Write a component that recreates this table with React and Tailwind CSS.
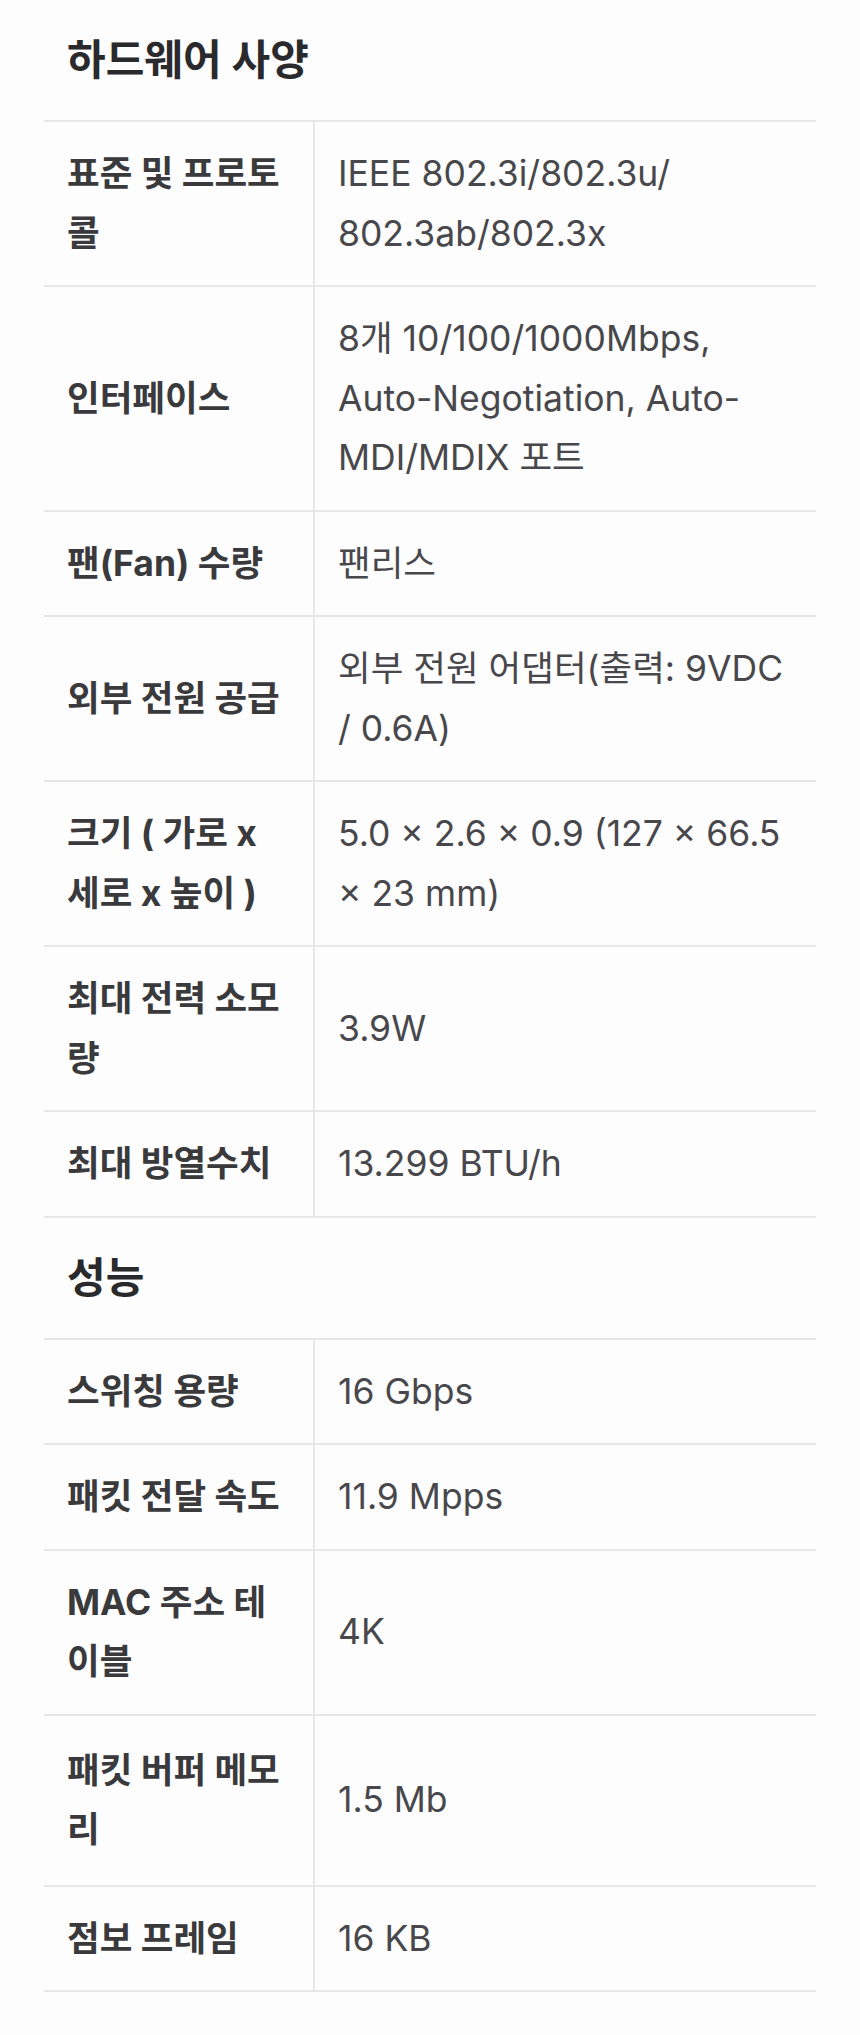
import React from 'react';

const FONT = { fontFamily: 'Inter, "Noto Sans CJK KR", sans-serif' };

const sections = [
    {
        title: '하드웨어 사양',
        rows: [
            { label: ['표준 및 프로토', '콜'], value: ['IEEE 802.3i/802.3u/', '802.3ab/802.3x'] },
            { label: ['인터페이스'], value: ['8개 10/100/1000Mbps,', 'Auto-Negotiation, Auto-', 'MDI/MDIX 포트'] },
            { label: ['팬(Fan) 수량'], value: ['팬리스'] },
            { label: ['외부 전원 공급'], value: ['외부 전원 어댑터(출력: 9VDC', '/ 0.6A)'] },
            { label: ['크기 ( 가로 x', '세로 x 높이 )'], value: ['5.0 × 2.6 × 0.9 (127 × 66.5', '× 23 mm)'] },
            { label: ['최대 전력 소모', '량'], value: ['3.9W'] },
            { label: ['최대 방열수치'], value: ['13.299 BTU/h'] },
        ],
    },
    {
        title: '성능',
        rows: [
            { label: ['스위칭 용량'], value: ['16 Gbps'] },
            { label: ['패킷 전달 속도'], value: ['11.9 Mpps'] },
            { label: ['MAC 주소 테', '이블'], value: ['4K'] },
            { label: ['패킷 버퍼 메모', '리'], value: ['1.5 Mb'], tall: true },
            { label: ['점보 프레임'], value: ['16 KB'] },
        ],
    },
];

const Lines = ({ lines }) =>
    lines.map((line, i) => (
        <React.Fragment key={i}>
            {i > 0 && <br />}
            {line}
        </React.Fragment>
    ));

const SpecRow = ({ row }) => {
    const pad = row.tall ? 'py-[25px]' : 'py-[22px]';
    return (
        <div className="flex border-b-2 border-[#e6e6eb]">
            <div className={`w-[271px] shrink-0 flex items-center border-r-2 border-[#e6e6eb] pl-[23px] pr-2 ${pad} text-[35.5px] leading-[59.5px] font-bold text-[#3a3a3d] whitespace-nowrap`}>
                <div>
                    <Lines lines={row.label} />
                </div>
            </div>
            <div className={`flex-1 flex items-center pl-[23px] pr-2 ${pad} text-[35.5px] leading-[59.5px] text-[#48484c] whitespace-nowrap`}>
                <div>
                    <Lines lines={row.value} />
                </div>
            </div>
        </div>
    );
};

const App = () => {
    return (
        <div className="min-h-screen w-full bg-[#fdfdfd] px-[44px]" style={FONT}>
            {sections.map((section) => (
                <section key={section.title}>
                    <h2 className="pl-[23px] pt-[30px] pb-[30px] text-[42px] leading-[60px] font-bold text-[#2a2a2d]">
                        {section.title}
                    </h2>
                    <div className="border-t-2 border-[#e6e6eb]">
                        {section.rows.map((row, i) => (
                            <SpecRow key={i} row={row} />
                        ))}
                    </div>
                </section>
            ))}
        </div>
    );
};

export default App;
